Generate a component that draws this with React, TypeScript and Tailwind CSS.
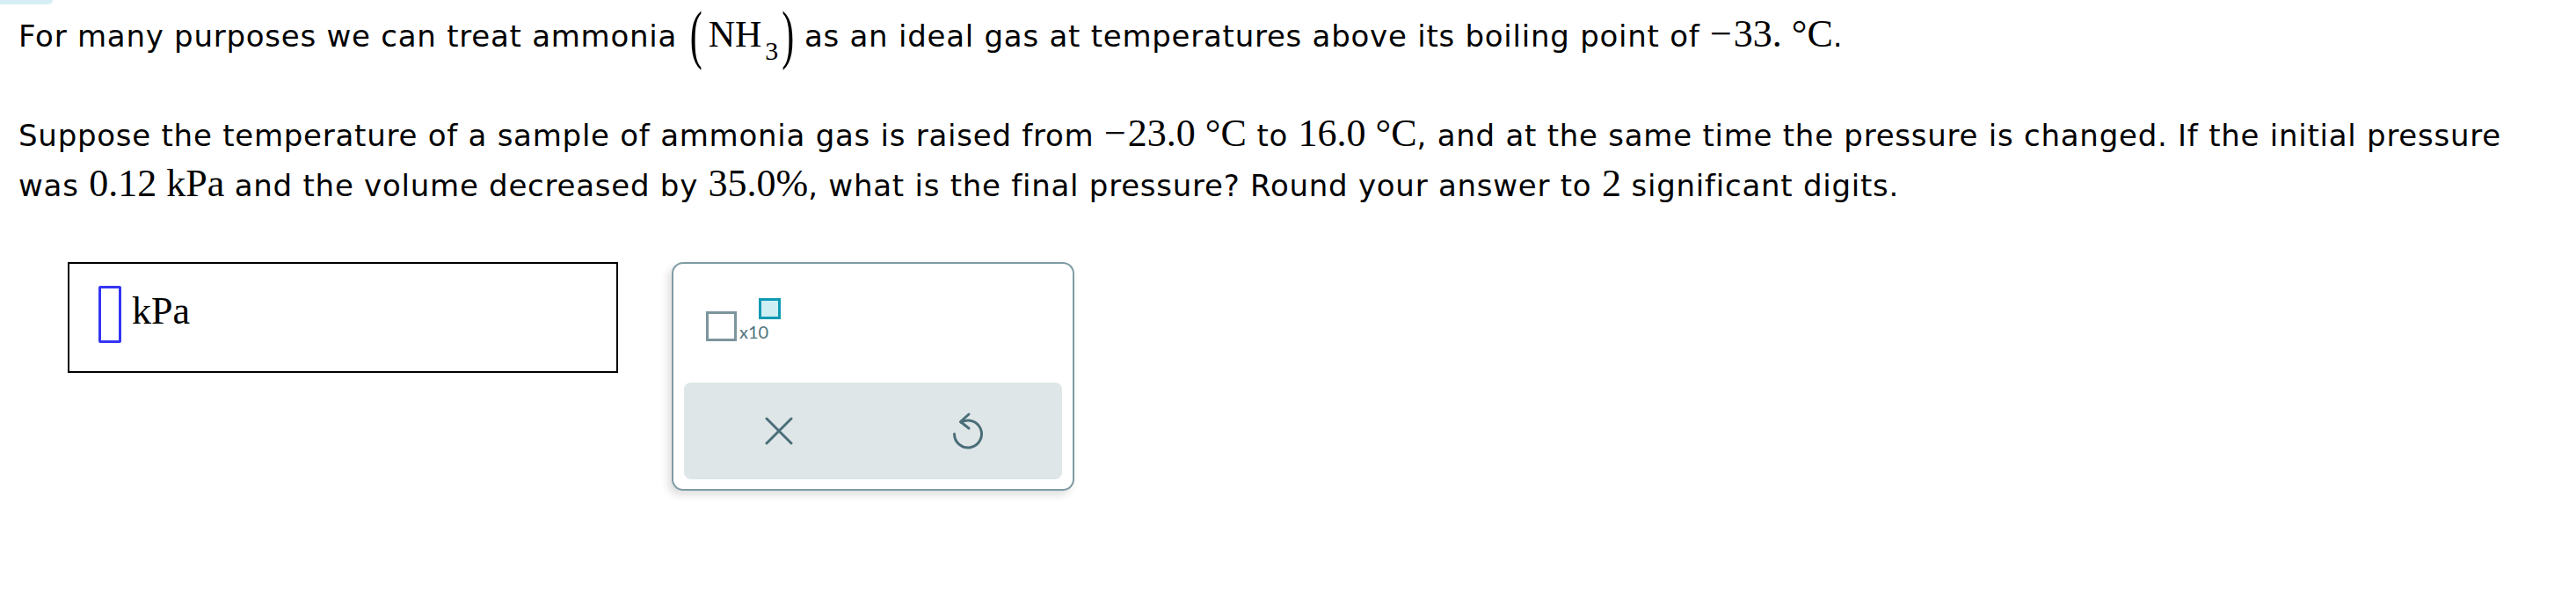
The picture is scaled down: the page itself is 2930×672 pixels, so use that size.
import React from 'react';

const M = ({ children, className = '' }: { children: React.ReactNode; className?: string }) => (
  <span className={`font-['Liberation_Serif','Times_New_Roman',serif] text-[44px] leading-none tracking-normal ${className}`}>
    {children}
  </span>
);

const Minus = () => <span className="mr-[2px]">−</span>;

const XIcon = () => (
  <svg width="32" height="32" viewBox="0 0 32 32" fill="none" stroke="#4a6e78" strokeWidth="3" strokeLinecap="round">
    <path d="M2 2 L30 30" />
    <path d="M30 2 L2 30" />
  </svg>
);

const UndoIcon = () => (
  <svg width="40" height="48" viewBox="0 0 40 48" fill="none" stroke="#4a6e78" strokeWidth="3" strokeLinecap="round" strokeLinejoin="round">
    <path d="M12 14.2 A15.5 15.5 0 1 1 4.5 27.5" />
    <path d="M21 5 L11.5 13.5 L21 21" />
  </svg>
);

const App = () => {
  return (
    <div className="min-h-screen bg-white text-black font-['DejaVu_Sans',Verdana,sans-serif]">
      {/* cut-off tab at the top */}
      <div className="h-[5px] w-[60px] rounded-br-[12px] bg-[#d6eff4]" />

      <div className="pl-[21px] pr-[59px]">
        <p className="mt-[8px] text-[34px] leading-[57px] tracking-[0.75px]">
          For many purposes we can treat ammonia{' '}
          <span className="ml-[3px] font-['Liberation_Serif','Times_New_Roman',serif] text-[42px] leading-none tracking-normal">
            <span className="inline-block scale-y-[1.75]">(</span>
            <span className="ml-[7px]">NH</span>
            <span className="ml-[4px] text-[30px] align-[-15px]">3</span>
            <span className="ml-[4px] inline-block scale-y-[1.75]">)</span>
          </span>{' '}
          as an ideal gas at temperatures above its boiling point of{' '}
          <M>
            <Minus />
            33. °C
          </M>
          .
        </p>

        <p className="mt-[53px] text-[34px] leading-[57px] tracking-[0.75px]">
          Suppose the temperature of a sample of ammonia gas is raised from{' '}
          <M>
            <Minus />
            23.0 °C
          </M>{' '}
          to <M>16.0 °C</M>, and at the same time the pressure is changed. If the initial pressure was{' '}
          <M>0.12 kPa</M> and the volume decreased by <M>35.0%</M>, what is the final pressure? Round your
          answer to <M>2</M> significant digits.
        </p>
      </div>

      <div className="mt-[58px] flex items-start gap-[61px] pl-[77px]">
        {/* answer field */}
        <div className="flex h-[126px] w-[626px] items-start border-2 border-black pl-[33px] pt-[25px]">
          <div className="h-[65px] w-[26px] rounded-[2px] border-[3px] border-[#3535f5]" />
          <span className="ml-[12px] mt-[7px] font-['Liberation_Serif','Times_New_Roman',serif] text-[44px] leading-none">
            kPa
          </span>
        </div>

        {/* tool panel */}
        <div className="flex h-[260px] w-[458px] flex-col rounded-[13px] border-2 border-[#7f9ca5] bg-white shadow-[-4px_5px_10px_rgba(0,0,0,0.13)]">
          <div className="pl-[37px] pt-[54px]">
            <div className="relative inline-flex items-end">
              <div className="h-[34px] w-[35px] border-[3px] border-[#7d959c]" />
              <span className="mb-[1px] ml-[3px] font-['Lato','Open_Sans',sans-serif] text-[20px] leading-none text-[#4f737c]">
                x10
              </span>
              <div className="absolute left-[60px] top-[-15px] h-[24px] w-[25px] border-[3px] border-[#0e9ab4] bg-[#cdeef3]" />
            </div>
          </div>

          <div className="mx-[12px] mb-[11px] mt-auto grid h-[110px] grid-cols-2 rounded-[8px] bg-[#dfe6e8]">
            <button className="flex items-center justify-center">
              <XIcon />
            </button>
            <button className="flex items-center justify-center">
              <UndoIcon />
            </button>
          </div>
        </div>
      </div>
    </div>
  );
};

export default App;
